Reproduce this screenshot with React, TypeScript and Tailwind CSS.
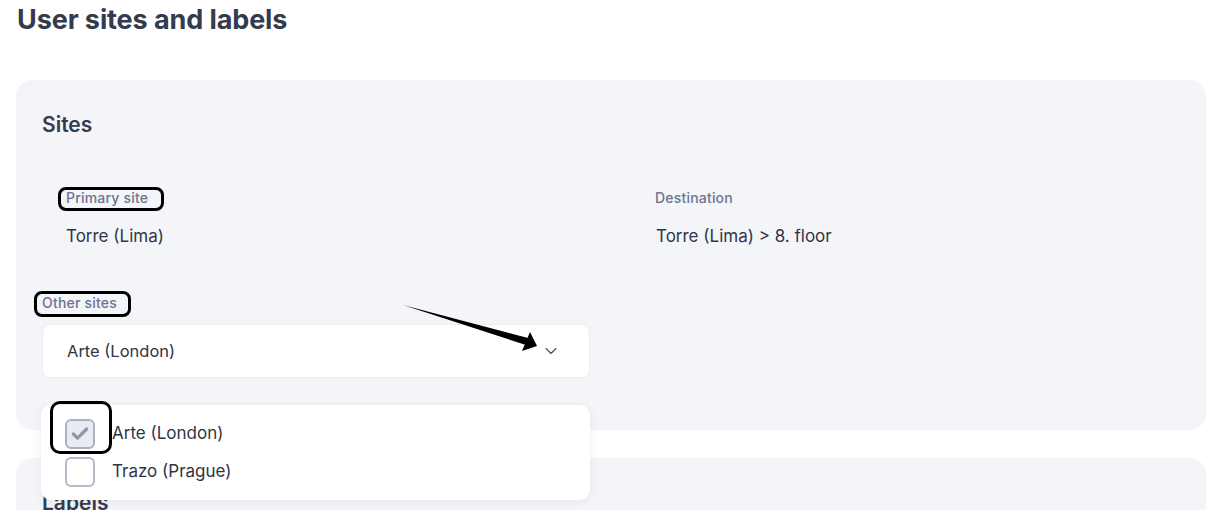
import { ChevronDown, Check } from 'lucide-react'

const font = { fontFamily: 'Inter, "Noto Sans", sans-serif' }

function Label({ children }: { children: React.ReactNode }) {
  return <div className="text-[14px] leading-5 font-medium tracking-[0.2px] text-[#6b7390]">{children}</div>
}

function Box({ checked }: { checked?: boolean }) {
  return (
    <span
      className={
        'flex h-[30px] w-[30px] shrink-0 items-center justify-center rounded-[6px] border-2 ' +
        (checked ? 'border-[#a9b1c2] bg-[#e8ebf1]' : 'border-[#b3bac8] bg-white')
      }
    >
      {checked && <Check size={20} strokeWidth={4} className="text-[#8f98aa]" />}
    </span>
  )
}

export default function App() {
  const options = [
    { name: 'Arte (London)', checked: true },
    { name: 'Trazo (Prague)', checked: false },
  ]

  return (
    <div className="relative h-[510px] overflow-hidden bg-white text-[#2f3545]" style={font}>
      <h1 className="pl-[17px] text-[27px] font-bold leading-[40px] tracking-[-0.1px] text-[#343b4f]">
        User sites and labels
      </h1>

      <div className="ml-4 mr-[18px] mt-10 rounded-2xl bg-[#f4f5f9] pb-[52px] pl-[26px] pt-[31px]">
        <h2 className="text-[21px] font-semibold leading-7 text-[#343b4f]">Sites</h2>

        <div className="mt-[49px] flex">
          <div className="w-[613px] pl-6">
            <Label>Primary site</Label>
            <div className="mt-[18px] text-[17px] leading-5">Torre (Lima)</div>
          </div>
          <div>
            <Label>Destination</Label>
            <div className="mt-[18px] pl-px text-[17px] leading-5">Torre (Lima) &gt; 8. floor</div>
          </div>
        </div>

        <div className="mt-[47px]">
          <Label>Other sites</Label>
          <div className="relative mt-[11px] flex h-[54px] w-[548px] items-center justify-between rounded-lg border border-[#eceef3] bg-white pl-6 pr-[28px] text-[16.5px]">
            <span>Arte (London)</span>
            <ChevronDown size={20} strokeWidth={1.4} className="text-[#4a5268]" />

            <div className="absolute left-[-2px] top-[80px] z-10 w-[549px] rounded-[10px] bg-white pb-[13px] pl-6 pt-[14px] shadow-[0_2px_10px_rgba(40,50,80,0.08)]">
              <div className="flex flex-col gap-2">
                {options.map((o) => (
                  <div key={o.name} className="flex items-center gap-[17px] text-[17px]">
                    <Box checked={o.checked} />
                    <span>{o.name}</span>
                  </div>
                ))}
              </div>
            </div>
          </div>
        </div>
      </div>

      <div className="ml-4 mr-[18px] mt-7 h-[120px] rounded-2xl bg-[#f4f5f9] pl-[26px] pt-[31px]">
        <h2 className="text-[21px] font-semibold leading-7 text-[#343b4f]">Labels</h2>
      </div>

      {/* annotation outlines */}
      <div className="pointer-events-none absolute left-[58px] top-[187px] h-[24px] w-[106px] rounded-lg border-[3px] border-black" />
      <div className="pointer-events-none absolute left-[34px] top-[291px] h-[26px] w-[97px] rounded-lg border-[3px] border-black" />
      <div className="pointer-events-none absolute left-[50px] top-[401px] z-20 h-[53px] w-[62px] rounded-[10px] border-[3px] border-black" />

      <svg className="pointer-events-none absolute left-0 top-0 z-20" width="1224" height="510">
        <polygon points="403,305 528,338 526,345" fill="#000" />
        <polygon points="537,346 530,332 522,351" fill="#000" />
      </svg>
    </div>
  )
}
